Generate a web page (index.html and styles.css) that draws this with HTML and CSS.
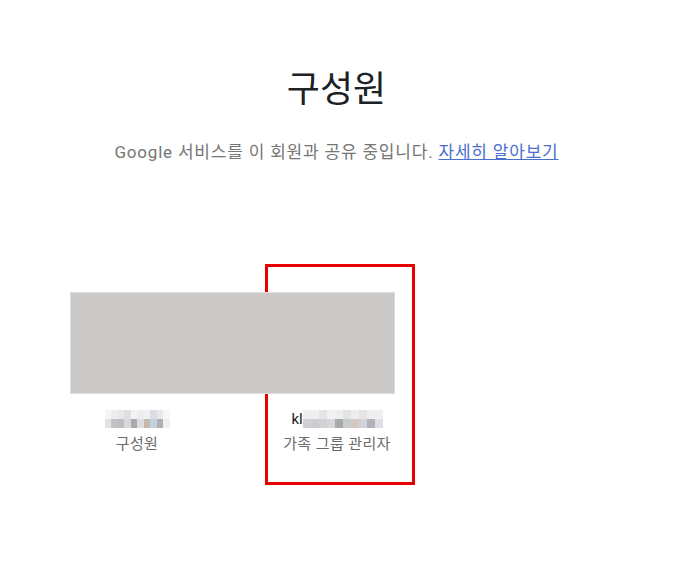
FILE: index.html
```html
<!DOCTYPE html>
<html lang="ko">

<head>
   <meta charset="UTF-8">
   <meta name="viewport" content="width=device-width, initial-scale=1.0">
   <title>구성원</title>
   <link rel="stylesheet" href="styles.css">
</head>

<body>

   <main class="page">
       <h1 class="title">구성원</h1>
       <p class="subtitle">Google 서비스를 이 회원과 공유 중입니다. <a href="#">자세히 알아보기</a></p>

       <div class="members">
           <div class="member">
               <div class="avatar"></div>
               <div class="name">
                   <span class="blur">
                       <i style="background:#f4f4f6"></i><i style="background:#eeeeef"></i><i style="background:#e8e8ea"></i><i style="background:#e2dfe2"></i><i style="background:#f2f3f5"></i><i style="background:#eeeef0"></i><i style="background:#eef2f5"></i><i style="background:#dddce0"></i><i style="background:#e9e9ec"></i><i style="background:#f7f7f8"></i>
                       <i style="background:#e6e2e2"></i><i style="background:#c2c1c6"></i><i style="background:#bdbdc2"></i><i style="background:#d9d9dc"></i><i style="background:#aaa9ae"></i><i style="background:#dedee0"></i><i style="background:#c4b9ac"></i><i style="background:#c3d2dc"></i><i style="background:#adb0b6"></i><i style="background:#f0f0f2"></i>
                   </span>
               </div>
               <div class="role">구성원</div>
           </div>
           <div class="member">
               <div class="avatar"></div>
               <div class="name">kl<span class="blur short">
                       <i style="background:#eeeef0"></i><i style="background:#f0f0f2"></i><i style="background:#e4e4e6"></i><i style="background:#f2f2f4"></i><i style="background:#eeeef0"></i><i style="background:#e2e4e4"></i><i style="background:#eceef0"></i><i style="background:#e6e4e6"></i><i style="background:#eeeef0"></i><i style="background:#f0f0f2"></i>
                       <i style="background:#d0d0d4"></i><i style="background:#cbcbd0"></i><i style="background:#d2d2d6"></i><i style="background:#d8d8db"></i><i style="background:#a8a8a8"></i><i style="background:#c6cdcd"></i><i style="background:#d2cac2"></i><i style="background:#d4d4d8"></i><i style="background:#aeb3ba"></i><i style="background:#e0e0e4"></i>
                   </span></div>
               <div class="role">가족 그룹 관리자</div>
           </div>
       </div>

       <div class="redact"></div>
       <div class="highlight"></div>
   </main>

</body>

</html>
```

FILE: styles.css
```css
body {
    font-family: Roboto, "Noto Sans CJK KR", Arial, sans-serif;
    margin: 0;
    background-color: #ffffff;
}

.page {
    position: relative;
    width: 673px;
    height: 563px;
    display: flex;
    flex-direction: column;
    align-items: center;
}

.title {
    margin: 60px 0 0;
    font-family: "Noto Sans CJK KR", sans-serif;
    font-size: 36px;
    font-weight: 400;
    line-height: 52px;
    color: #202124;
}

.subtitle {
    margin: 28px 0 0;
    font-size: 17px;
    line-height: 24px;
    letter-spacing: 0.8px;
    color: #757575;
}

.subtitle a {
    color: #4a6fcf;
    text-decoration: underline;
}

.members {
    align-self: flex-start;
    margin: 132px 0 0 37px;
    display: flex;
}

.member {
    width: 200px;
    display: flex;
    flex-direction: column;
    align-items: center;
}

.avatar {
    width: 96px;
    height: 96px;
    border-radius: 50%;
    background-color: #cbcac8;
}

.name {
    margin-top: 17px;
    height: 20px;
    display: flex;
    align-items: center;
    font-size: 15px;
    color: #202124;
}

.blur {
    display: grid;
    grid-template-columns: repeat(10, 6.5px);
    grid-auto-rows: 9px;
}

.blur.short {
    grid-template-columns: repeat(10, 8px);
}

.role {
    margin-top: 5px;
    font-size: 15px;
    line-height: 20px;
    letter-spacing: 0.4px;
    color: #6b6b6b;
}

.redact {
    position: absolute;
    left: 70px;
    top: 292px;
    width: 323px;
    height: 100px;
    background-color: #cbcac8;
    border: 1px solid #dddcdb;
}

.highlight {
    position: absolute;
    left: 265px;
    top: 264px;
    width: 144px;
    height: 215px;
    border: 3px solid #e60000;
    z-index: -1;
}
```
